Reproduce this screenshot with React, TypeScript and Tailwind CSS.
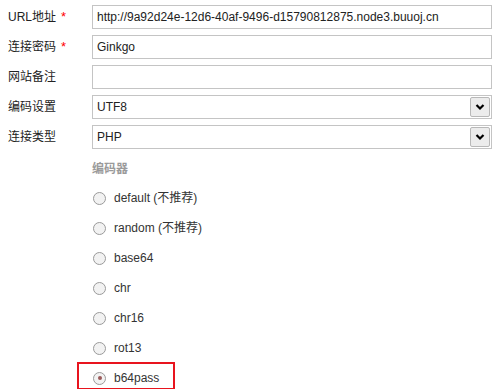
import React from "react";

const font = { fontFamily: '"Liberation Sans", "Noto Sans CJK SC", sans-serif' };

function Field({ label, required, value, select }: { label: string; required?: boolean; value: string; select?: boolean }) {
  return (
    <div className="flex items-center h-6">
      <div className="w-[92px] pl-2 text-[12px] text-[#222] flex items-center">
        <span>{label}</span>
        {required && <span className="text-[#f00] ml-[5px] text-[13px]">*</span>}
      </div>
      <div className="flex-1 mr-2 h-6 border border-[#c4c4c4] bg-white flex items-center pl-[4px] pr-[1px] text-[12px] text-[#222]">
        <span className="flex-1 truncate">{value}</span>
        {select && (
          <div className="w-5 h-5 border border-[#b8b8b8] rounded-[2px] bg-[#ececec] flex items-center justify-center">
            <svg width="10" height="8" viewBox="0 0 10 8">
              <path d="M1.5 2 L5 5.5 L8.5 2" stroke="#000" strokeWidth="2.2" fill="none" />
            </svg>
          </div>
        )}
      </div>
    </div>
  );
}

function Radio({ label, checked }: { label: string; checked?: boolean }) {
  return (
    <div className="flex items-center h-[30px]">
      <div className="w-[13px] h-[13px] rounded-full border border-[#9a9a9a] bg-[#f2f2f2] flex items-center justify-center">
        {checked && <div className="w-[4px] h-[4px] rounded-full bg-[#9b5a5a]" />}
      </div>
      <span className="ml-[8px] text-[12px] text-[#333]">{label}</span>
    </div>
  );
}

export default function App() {
  const radios = ["default (不推荐)", "random (不推荐)", "base64", "chr", "chr16", "rot13"];
  return (
    <div className="w-[500px] h-[389px] bg-white overflow-hidden pt-[5px]" style={font}>
      <div className="flex flex-col gap-[6px]">
        <Field label="URL地址" required value="http://9a92d24e-12d6-40af-9496-d15790812875.node3.buuoj.cn" />
        <Field label="连接密码" required value="Ginkgo" />
        <Field label="网站备注" value="" />
        <Field label="编码设置" value="UTF8" select />
        <Field label="连接类型" value="PHP" select />
      </div>
      <div className="pl-[92px] mt-[11px]">
        <div className="text-[12px] text-[#9a9a9a] font-bold h-[18px] flex items-center">编码器</div>
        <div className="mt-[5px] pl-[1px] flex flex-col">
          {radios.map((r) => (
            <Radio key={r} label={r} />
          ))}
          <div className="relative">
            <Radio label="b64pass" checked />
            <div className="absolute left-[-16px] top-[-1px] w-[98px] h-[28px] border-2 border-[#e8141e]" />
          </div>
        </div>
      </div>
    </div>
  );
}
